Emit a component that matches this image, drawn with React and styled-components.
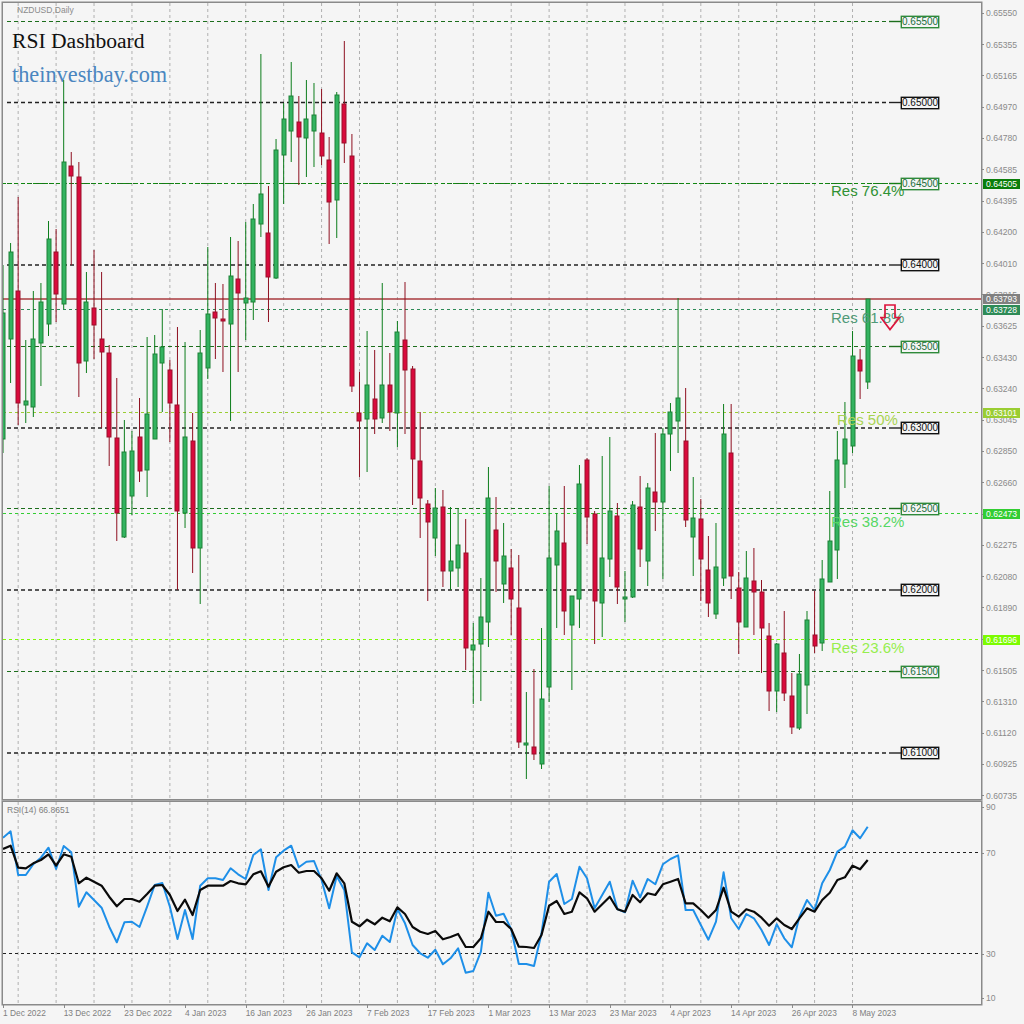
import React from 'react'
import styled, { createGlobalStyle } from 'styled-components'

// [high, top, bottom, low, up] in page pixels, read off the daily candles
const candles = [
  [265,313,439,453,1],[243,252,339,383,1],[197,291,403,425,0],[340,401,405,423,1],[291,339,407,417,1],
  [283,302,343,386,1],[221,239,324,336,1],[229,252,294,322,0],[80,162,304,309,1],[152,166,176,265,0],
  [162,177,363,397,0],[272,302,361,373,1],[250,308,325,359,0],[272,339,352,428,0],[345,353,437,466,0],
  [378,438,513,541,0],[420,452,537,538,1],[431,451,496,515,1],[398,437,471,482,0],[337,414,470,497,1],
  [335,354,439,439,1],[309,347,363,412,1],[360,370,403,442,0],[327,405,511,590,0],[342,437,513,528,1],
  [413,441,548,573,0],[330,353,548,604,1],[247,314,368,379,1],[283,312,318,359,0],[284,319,321,372,0],
  [237,276,324,421,1],[241,279,293,372,0],[222,298,303,340,1],[204,219,302,320,1],[54,194,224,237,1],
  [186,233,277,322,0],[139,150,278,279,1],[103,119,155,204,1],[62,96,131,162,1],[96,122,137,185,0],
  [80,119,138,177,1],[83,115,131,167,1],[89,133,156,165,0],[137,160,202,244,0],[92,95,200,238,1],
  [41,104,143,163,0],[134,156,386,392,0],[372,413,421,477,0],[331,385,419,472,1],[350,399,419,434,0],
  [283,385,418,423,1],[353,385,412,431,0],[321,332,413,447,1],[282,340,370,434,0],[366,369,459,505,0],
  [412,461,498,538,0],[500,504,522,601,0],[488,508,538,556,1],[490,507,571,587,0],[507,561,571,590,1],
  [508,545,568,587,1],[519,553,648,670,0],[623,645,650,704,1],[578,617,644,701,1],[467,498,622,647,1],
  [497,530,561,592,0],[523,556,584,603,1],[549,568,599,635,0],[555,608,742,748,0],[692,743,745,779,1],
  [669,747,754,760,0],[628,699,764,769,1],[486,558,687,702,1],[513,531,565,628,1],[486,543,611,635,0],
  [596,596,625,690,1],[465,484,599,628,1],[458,460,517,544,0],[511,514,601,644,0],[456,558,603,637,1],
  [437,511,559,577,1],[503,516,587,604,0],[571,597,599,622,1],[501,505,597,598,1],[476,507,549,567,0],
  [483,488,561,586,1],[433,492,502,531,0],[428,434,502,579,1],[403,412,434,471,1],[298,398,421,453,1],
  [388,441,520,527,0],[477,518,537,576,1],[499,519,559,601,0],[536,570,603,617,0],[523,567,614,619,1],
  [404,434,578,586,1],[404,453,576,599,0],[572,588,622,654,0],[551,578,627,627,1],[548,581,592,635,0],
  [580,592,628,673,0],[623,636,691,711,0],[643,644,691,712,1],[611,653,693,701,0],[673,696,727,734,0],
  [654,674,728,730,1],[611,620,685,714,1],[591,635,646,653,0],[560,579,643,651,1],[491,541,582,582,1],
  [431,460,550,579,1],[402,439,464,488,1],[331,356,446,453,1],[349,360,371,399,0],[299,299,382,389,1],
]

// rsi readings, as y offsets below the top of the sub window crop (3x)
const rsiFast = [128,109,240,240,208,188,158,222,153,172,335,292,315,338,395,442,382,380,396,335,270,264,335,432,345,432,272,250,250,255,220,238,252,180,163,285,187,167,152,217,200,198,255,340,243,285,472,487,445,465,422,441,342,385,450,475,488,464,508,490,460,533,528,470,293,362,356,403,507,507,513,415,260,237,327,312,215,250,340,300,260,342,352,257,307,252,268,208,192,181,345,345,390,434,380,232,370,402,357,370,405,450,388,430,457,365,315,345,265,225,170,155,106,130,95]
const rsiSlow = [162,152,218,220,205,195,178,212,178,185,265,248,260,272,305,334,312,312,320,297,272,270,300,348,314,360,285,272,272,272,258,265,268,238,229,275,230,217,210,233,228,228,250,287,235,265,380,394,374,388,368,379,337,357,396,410,417,408,433,426,417,456,456,430,350,381,381,402,455,456,459,420,332,318,357,350,292,310,350,328,305,343,350,300,322,295,300,268,260,252,325,325,345,368,345,278,350,365,343,350,368,392,370,390,402,370,340,350,315,293,255,247,212,223,195]

const levels = [
  { y: 21.5, label: '0.65500', green: true },
  { y: 102.5, label: '0.65000' },
  { y: 183.5, label: '0.64500', green: true },
  { y: 265, label: '0.64000' },
  { y: 346.5, label: '0.63500', green: true },
  { y: 428, label: '0.63000' },
  { y: 508.5, label: '0.62500', green: true },
  { y: 590, label: '0.62000' },
  { y: 671.5, label: '0.61500', green: true },
  { y: 753, label: '0.61000' },
]

const resLines = [
  { y: 183.5, color: '#0f8a0f', label: 'Res 76.4%', labelX: 831, labelY: 191, price: '0.64505', badge: '#0a7d0a', text: '#2f9133' },
  { y: 309.5, color: '#2e8b57', label: 'Res 61.8%', labelX: 831, labelY: 318, price: '0.63728', badge: '#2e8b57', text: '#4f9a78' },
  { y: 412.5, color: '#9acd32', label: 'Res 50%', labelX: 837, labelY: 420, price: '0.63101', badge: '#9acd32', text: '#a9d353' },
  { y: 513.5, color: '#32cd32', label: 'Res 38.2%', labelX: 831, labelY: 522, price: '0.62473', badge: '#32cd32', text: '#55d765' },
  { y: 639.5, color: '#7cfc00', label: 'Res 23.6%', labelX: 831, labelY: 648, price: '0.61696', badge: '#7cfc00', text: '#96ee4e' },
]

// blanks are the two scale rows that sit under a price badge
const priceTicks = ['0.65550','0.65355','0.65165','0.64970','0.64780','0.64585','0.64395','0.64200','0.64010','0.63815','0.63625','0.63430','0.63240','0.63045','0.62850','0.62660','','0.62275','0.62080','0.61890','','0.61505','0.61310','0.61120','0.60925','0.60735']
const dates = ['1 Dec 2022','13 Dec 2022','23 Dec 2022','4 Jan 2023','16 Jan 2023','26 Jan 2023','7 Feb 2023','17 Feb 2023','1 Mar 2023','13 Mar 2023','23 Mar 2023','4 Apr 2023','14 Apr 2023','26 Apr 2023','8 May 2023']
const rsiScale = [
  { value: 90, y: 807 },
  { value: 70, y: 853 },
  { value: 30, y: 953.5 },
  { value: 10, y: 998 },
]

const barX = (i) => 3 + i * 7.585
const gridXs = Array.from({ length: 23 }, (_, k) => barX(2 + k * 5))
const rsiPoints = (list) => list.map((z, i) => `${barX(i).toFixed(1)},${(795 + z / 3).toFixed(1)}`).join(' ')

const PANE_TOP = 3

export default function App() {
  return (
    <Terminal>
      <GlobalStyle />

      <ChartPane>
        <ChartSvg viewBox="3 3 978 796">
          {gridXs.map((x) => (
            <line key={x} x1={x} x2={x} y1="3" y2="799" stroke="#b0b0b0" strokeDasharray="3 3" />
          ))}
          {levels.map((l) => (
            <g key={l.label}>
              <line x1="7" x2="889" y1={l.y} y2={l.y} stroke={l.green ? '#1c6e1c' : '#222'} strokeWidth={l.green ? 1 : 1.4} strokeDasharray="4 3" />
              <line x1="889" x2="901" y1={l.y} y2={l.y} stroke={l.green ? '#1c6e1c' : '#222'} strokeWidth="1.4" />
            </g>
          ))}
          {resLines.map((r) => (
            <line key={r.price} x1="3" x2="981" y1={r.y} y2={r.y} stroke={r.color} strokeDasharray="3 3" />
          ))}
          <line x1="3" x2="981" y1="299" y2="299" stroke="#a83a3e" strokeWidth="1.6" />
          {candles.map(([high, top, bottom, low, up], i) => {
            const x = barX(i)
            return (
              <g key={i}>
                <line x1={x} x2={x} y1={high} y2={low} stroke={up ? '#0d7d1c' : '#8e1020'} />
                <rect
                  x={Math.round(x) - 2}
                  y={top}
                  width="4"
                  height={bottom - top}
                  fill={up ? '#33b360' : '#d90a3c'}
                  stroke={up ? '#1c8237' : '#99102a'}
                />
              </g>
            )
          })}
        </ChartSvg>

        <SymbolCaption>NZDUSD,Daily</SymbolCaption>
        <TitleBlock>
          <Title>RSI Dashboard</Title>
          <SiteName>theinvestbay.com</SiteName>
        </TitleBlock>

        {levels.map((l) => (
          <LevelTag key={l.label} $green={l.green} style={{ top: l.y - PANE_TOP - 6 }}>
            {l.label}
          </LevelTag>
        ))}

        {resLines.map((r) => (
          <ResLabel key={r.label} $color={r.text} style={{ left: r.labelX - 3, top: r.labelY - PANE_TOP - 9 }}>
            {r.label}
          </ResLabel>
        ))}

        <SellArrow viewBox="0 0 21 27">
          <path d="M5 1 H15 V13.5 H19.5 L10 25.5 L0.8 13.5 H5 Z" fill="none" stroke="#dc143c" strokeWidth="1.7" />
        </SellArrow>
      </ChartPane>

      <PriceAxis>
        {priceTicks.map((p, i) => (
          <AxisTick key={i}>{p}</AxisTick>
        ))}
        <PriceBadge $bg="#808080" style={{ top: 294 }}>0.63793</PriceBadge>
        {resLines.map((r) => (
          <PriceBadge key={r.price} $bg={r.badge} style={{ top: r.y - 5 }}>
            {r.price}
          </PriceBadge>
        ))}
      </PriceAxis>

      <RsiPane>
        <ChartSvg viewBox="3 802 978 202">
          {gridXs.map((x) => (
            <line key={x} x1={x} x2={x} y1="802" y2="1004" stroke="#b0b0b0" strokeDasharray="3 3" />
          ))}
          <line x1="3" x2="981" y1="852.5" y2="852.5" stroke="#222" strokeWidth="1.2" strokeDasharray="3 3" />
          <line x1="3" x2="981" y1="953.5" y2="953.5" stroke="#222" strokeWidth="1.2" strokeDasharray="3 3" />
          <polyline points={rsiPoints(rsiFast)} fill="none" stroke="#1e8fe8" strokeWidth="2" strokeLinejoin="round" />
          <polyline points={rsiPoints(rsiSlow)} fill="none" stroke="#0a0a0a" strokeWidth="2.2" strokeLinejoin="round" />
        </ChartSvg>
        <RsiCaption>RSI(14) 66.8651</RsiCaption>
      </RsiPane>

      <RsiAxis>
        {rsiScale.map((s) => (
          <RsiTick key={s.value} style={{ top: s.y - 800 - 5 }}>{s.value}</RsiTick>
        ))}
      </RsiAxis>

      <TimeAxis>
        {dates.map((d) => (
          <DateLabel key={d}>{d}</DateLabel>
        ))}
      </TimeAxis>
    </Terminal>
  )
}

const GlobalStyle = createGlobalStyle`
  html, body {
    margin: 0;
    padding: 0;
    background: #f5f5f5;
  }
  body {
    font-family: "Liberation Sans", Arial, sans-serif;
  }
`

const Terminal = styled.div`
  width: 1024px;
  height: 1024px;
  overflow: hidden;
  background: #f5f5f5;
  display: grid;
  grid-template-columns: 982px 42px;
  grid-template-rows: 800px 205px 19px;
`

const ChartPane = styled.div`
  position: relative;
  margin: 2px 0 0 2px;
  border: 1px solid #8a8a8a;
  box-shadow: 0 0 0 0.5px #8a8a8a;
`

const RsiPane = styled.div`
  position: relative;
  margin: 1px 0 0 2px;
  border: 1px solid #8a8a8a;
  box-shadow: 0 0 0 0.5px #8a8a8a;
`

const ChartSvg = styled.svg`
  display: block;
  width: 100%;
  height: 100%;
`

const SymbolCaption = styled.div`
  position: absolute;
  left: 14px;
  top: 2px;
  font-size: 8.5px;
  line-height: 10px;
  color: #8c8c8c;
`

const RsiCaption = styled.div`
  position: absolute;
  left: 4px;
  top: 3px;
  font-size: 8.5px;
  line-height: 10px;
  color: #808080;
`

const TitleBlock = styled.div`
  position: absolute;
  left: 9px;
  top: 25px;
  display: flex;
  flex-direction: column;
  gap: 8px;
  font-family: "Liberation Serif", "Times New Roman", serif;
`

const Title = styled.div`
  font-size: 21.6px;
  line-height: 26px;
  color: #111;
`

const SiteName = styled.div`
  font-size: 22.3px;
  line-height: 26px;
  color: #4a86c0;
`

const LevelTag = styled.div`
  position: absolute;
  left: 898px;
  width: 38px;
  height: 12px;
  box-sizing: border-box;
  border: 1px solid ${(p) => (p.$green ? '#2f8a3a' : '#111')};
  box-shadow: 0 0 0 0.4px ${(p) => (p.$green ? '#2f8a3a' : '#111')};
  background: #f5f5f5;
  color: ${(p) => (p.$green ? '#1c6e3c' : '#111')};
  font-size: 10px;
  line-height: 10px;
  text-align: center;
`

const ResLabel = styled.div`
  position: absolute;
  font-size: 15px;
  line-height: 18px;
  white-space: nowrap;
  color: ${(p) => p.$color};
`

const SellArrow = styled.svg`
  position: absolute;
  left: 877px;
  top: 301px;
  width: 21px;
  height: 27px;
`

const PriceAxis = styled.div`
  position: relative;
  display: grid;
  grid-auto-rows: 31.3px;
  align-content: start;
  margin-top: -2.35px;
`

const AxisTick = styled.div`
  display: flex;
  align-items: center;
  gap: 2px;
  font-size: 8.6px;
  color: #8a8a8a;

  &::before {
    content: '';
    width: 2px;
    height: 1px;
    background: #8a8a8a;
  }
`

const PriceBadge = styled.div`
  position: absolute;
  left: 1px;
  width: 37px;
  height: 10px;
  margin-top: 2.35px;
  padding-left: 3px;
  box-sizing: border-box;
  background: ${(p) => p.$bg};
  color: #fff;
  font-size: 8.6px;
  line-height: 10px;
`

const RsiAxis = styled.div`
  position: relative;
`

const RsiTick = styled.div`
  position: absolute;
  left: 4px;
  font-size: 8.6px;
  line-height: 10px;
  color: #8a8a8a;

  &::before {
    content: '';
    position: absolute;
    left: -4px;
    top: 5px;
    width: 2px;
    height: 1px;
    background: #8a8a8a;
  }
`

const TimeAxis = styled.div`
  grid-column: 1 / -1;
  display: grid;
  grid-template-columns: repeat(15, 60.68px);
  padding-left: 3px;
`

const DateLabel = styled.div`
  position: relative;
  padding-top: 3px;
  font-size: 8.4px;
  line-height: 10px;
  white-space: nowrap;
  color: #808080;

  &::before {
    content: '';
    position: absolute;
    left: 0;
    top: 0;
    width: 1px;
    height: 3px;
    background: #8a8a8a;
  }
`
